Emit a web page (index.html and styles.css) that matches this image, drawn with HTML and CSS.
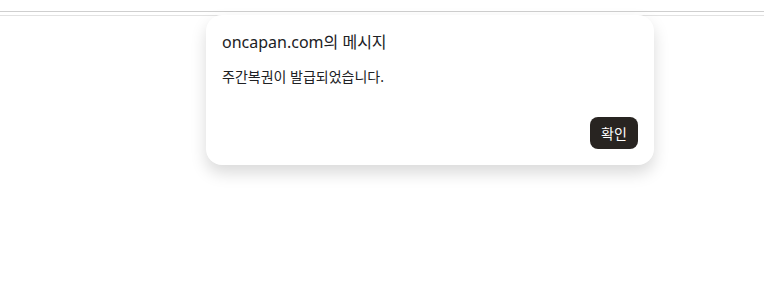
FILE: index.html
```html
<!DOCTYPE html>
<html lang="ko">
<head>
    <meta charset="UTF-8">
    <meta name="viewport" content="width=device-width, initial-scale=1.0">
    <title>oncapan.com</title>
    <link rel="stylesheet" href="styles.css">
</head>
<body>

<div class="toolbar"></div>
<div class="page-line"></div>

<!-- alert dialog -->
<div class="dialog">
    <div class="dialog-title">oncapan.com의 메시지</div>
    <div class="dialog-message">주간복권이 발급되었습니다.</div>
    <div class="dialog-buttons">
        <button type="button" class="btn-ok">확인</button>
    </div>
</div>

</body>
</html>
```

FILE: styles.css
```css
body {
    margin: 0;
    background-color: #fff;
    font-family: "Noto Sans", "Noto Sans CJK KR", sans-serif;
    color: #202124;
}
.toolbar {
    height: 11px;
    border-bottom: 1px solid #cfcfcf;
}
.page-line {
    margin-top: 3px;
    border-top: 1px solid #e2e2e2;
}
.dialog {
    position: absolute;
    left: 206px;
    top: 15px;
    width: 448px;
    height: 150px;
    box-sizing: border-box;
    padding: 15px 16px 16px 16px;
    background-color: #fff;
    border-radius: 16px;
    box-shadow: 0 8px 16px rgba(0, 0, 0, 0.15);
    display: flex;
    flex-direction: column;
}
.dialog-title {
    font-size: 16px;
    line-height: 24px;
}
.dialog-message {
    margin-top: 13px;
    font-size: 14px;
    line-height: 20px;
}
.dialog-buttons {
    margin-top: auto;
    display: flex;
    justify-content: flex-end;
}
.btn-ok {
    width: 48px;
    height: 32px;
    padding: 0;
    border: none;
    border-radius: 8px;
    background-color: #282421;
    color: #fff;
    font-family: inherit;
    font-size: 14px;
    cursor: pointer;
}
```
